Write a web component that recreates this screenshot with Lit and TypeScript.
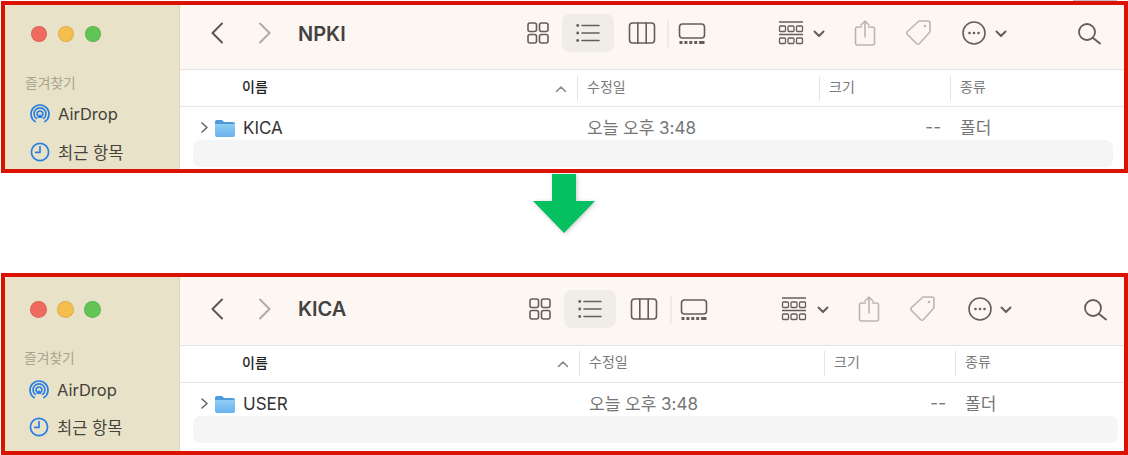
import { LitElement, html, svg, css } from "lit";
import { customElement, property } from "lit/decorators.js";

type Tool = { k: string; c: number; w: number };

const ic = (w: number, body: unknown) =>
  html`<svg width=${w} height="40" viewBox="${-w / 2} -20 ${w} 40">${body}</svg>`;

const icons: Record<string, (w: number) => unknown> = {
  back: (w) => ic(w, svg`<path class="s dk" d="M5 -9.5 L-4.5 0 L5 9.5"/>`),
  fwd: (w) => ic(w, svg`<path class="s lt" d="M-5 -9.5 L4.5 0 L-5 9.5"/>`),
  grid: (w) =>
    ic(w, svg`<g class="s m"><rect x="-10" y="-10" width="8.5" height="8.5" rx="2"/><rect x="1.5" y="-10" width="8.5" height="8.5" rx="2"/><rect x="-10" y="1.5" width="8.5" height="8.5" rx="2"/><rect x="1.5" y="1.5" width="8.5" height="8.5" rx="2"/></g>`),
  list: (w) =>
    ic(w, svg`<path class="s m" d="M-6 -7.5H11M-6 0H11M-6 7.5H11"/><g class="f"><circle cx="-10.3" cy="-7.5" r="1.4"/><circle cx="-10.3" cy="0" r="1.4"/><circle cx="-10.3" cy="7.5" r="1.4"/></g>`),
  cols: (w) =>
    ic(w, svg`<g class="s m"><rect x="-12.5" y="-10" width="25" height="20" rx="3"/><path d="M-4.2 -10V10M4.2 -10V10"/></g>`),
  div: (w) => ic(w, svg`<path class="s rule" d="M0 -12V14"/>`),
  gallery: (w) =>
    ic(w, svg`<rect class="s m" x="-12.5" y="-9" width="25" height="14" rx="3"/><g class="f"><rect x="-12.5" y="8" width="3" height="3"/><rect x="-7.6" y="8" width="3" height="3"/><rect x="-2.7" y="8" width="3" height="3"/><rect x="2.2" y="8" width="3" height="3"/><rect x="7.1" y="8" width="3" height="3"/><rect x="10" y="8" width="2.5" height="3"/></g>`),
  group: (w) =>
    ic(w, svg`<g class="s m thin"><path d="M-12 -11H12M-12 1.5H12"/><rect x="-11.5" y="-7" width="6" height="5.5" rx="1"/><rect x="-3" y="-7" width="6" height="5.5" rx="1"/><rect x="5.5" y="-7" width="6" height="5.5" rx="1"/><rect x="-11.5" y="5" width="6" height="5.5" rx="1"/><rect x="-3" y="5" width="6" height="5.5" rx="1"/><rect x="5.5" y="5" width="6" height="5.5" rx="1"/></g>`),
  chev: (w) => ic(w, svg`<path class="s m bold" d="M-4.5 -1.5 L0 3 L4.5 -1.5"/>`),
  share: (w) =>
    ic(w, svg`<path class="s gr" d="M-3.5 -6H-7.5Q-9.5 -6 -9.5 -4V10Q-9.5 12 -7.5 12H7.5Q9.5 12 9.5 10V-4Q9.5 -6 7.5 -6H3.5M0 4V-12M-4 -8L0 -12L4 -8"/>`),
  tag: (w) =>
    ic(w, svg`<path class="s gr" d="M1 -12H10Q12 -12 12 -10V-2Q12 -1 11 0L1.5 10.5Q0 12 -1.5 10.5L-10.5 1.5Q-12 0 -10.5 -1.5Z"/><circle class="fg" cx="7" cy="-7" r="1.3"/>`),
  more: (w) =>
    ic(w, svg`<circle class="s m" cx="0" cy="0" r="11"/><g class="f"><circle cx="-4.5" r="1.3"/><circle cx="0" r="1.3"/><circle cx="4.5" r="1.3"/></g>`),
  search: (w) => ic(w, svg`<circle class="s m mid" cx="-2" cy="-1" r="8"/><path class="s m bold" d="M4 5L11 10.5"/>`),
};

const toolset = (centers: number[]): Tool[] => {
  const keys = ["back", "fwd", "title", "grid", "list", "cols", "div", "gallery", "group", "chev", "share", "tag", "more", "chev", "search"];
  const widths: Record<string, number> = { back: 14, fwd: 14, title: 120, grid: 24, list: 52, cols: 28, div: 4, gallery: 28, group: 28, chev: 12, share: 24, tag: 28, more: 26, search: 28 };
  return keys.map((k, i) => ({ k, c: centers[i], w: widths[k] }));
};

const FIRST = toolset([217, 265, 358, 538, 588, 641.5, 668, 691.5, 791, 819, 865, 917.5, 974, 1001, 1089]);
const SECOND = toolset([217, 265, 358, 540, 590, 644, 671, 694, 794, 823, 869, 922, 980, 1006, 1095]);

@customElement("finder-panel")
export class FinderPanel extends LitElement {
  @property() variant = "first";
  @property() title = "";
  @property() item = "";
  @property({ attribute: false }) tools: Tool[] = [];

  static styles = css`
    :host { display: block; font-family: Inter, "Noto Sans CJK KR", sans-serif; }
    .panel { box-sizing: border-box; width: 1127px; border: 4px solid #dc1200; display: flex; overflow: hidden; background: #fff; }
    .first.panel { height: 172px; --tb: 65px; --tbpb: 7.5px; --titlept: 2px; --hd: 37px; --rowpt: 7px; --rowh: 33px; --stripe-r: 11px; --itempb: 1px;
      --lights-top: 21px; --light: 16px; --lights-gap: 11px; --lights-ml: 26px; --label-mt: 31px; --label-mb: 2px; --label-ml: 20px; --item: 38px; --item-ml: 25px;
      --cols: 397px 242px 131px 1fr; }
    .second.panel { height: 182px; --tb: 69px; --tbpb: 3.5px; --titlept: 0px; --hd: 36.5px; --rowpt: 7.5px; --rowh: 33.5px; --stripe-r: 6px; --itempb: 0px;
      --lights-top: 24px; --light: 17px; --lights-gap: 10px; --lights-ml: 24.5px; --label-mt: 30px; --label-mb: 3px; --label-ml: 19px; --item: 37px; --item-ml: 24px;
      --cols: 399px 245px 131px 1fr; }
    .side { box-sizing: border-box; width: 175px; flex: none; background: #e8e2c8; border-right: 1px solid #dcd7c0; padding-top: var(--lights-top); border-top-left-radius: 3px; }
    .lights { display: flex; gap: var(--lights-gap); margin-left: var(--lights-ml); }
    .light { width: var(--light); height: var(--light); border-radius: 50%; box-sizing: border-box; border: 1px solid rgba(0,0,0,.08); }
    .red { background: #ef6a5f; } .yellow { background: #f6bd4f; } .green { background: #62c454; }
    .label { height: 20px; line-height: 20px; margin: var(--label-mt) 0 var(--label-mb) var(--label-ml); font-size: 13.8px; font-weight: 400; color: #a8a490; }
    .item { height: var(--item); display: flex; align-items: center; gap: 8px; margin-left: var(--item-ml); font-size: 16.5px; color: #44423b; white-space: nowrap; padding-top: 1px; padding-bottom: var(--itempb); box-sizing: border-box; }
    .item svg { flex: none; width: 20px; height: 20px; }
    .blue { fill: none; stroke: #2a7fe2; stroke-width: 1.7; stroke-linecap: round; stroke-linejoin: round; }
    .bluef { fill: #2a7fe2; }

    .main { flex: 1; min-width: 0; display: flex; flex-direction: column; }
    .toolbar { box-sizing: border-box; flex: none; height: var(--tb); padding-bottom: var(--tbpb); background: #fcf7f2; border-bottom: 1.5px solid #e6e4e1; display: flex; align-items: center; }
    .slot { flex: none; height: 40px; display: flex; align-items: center; justify-content: center; box-sizing: border-box; }
    .slot.list { height: 38px; background: #f0ece7; border-radius: 8px; }
    .slot.title { justify-content: flex-start; font-size: 20px; font-weight: 600; color: #444240; padding-top: var(--titlept); }
    svg { display: block; overflow: visible; }
    .s { fill: none; stroke-width: 1.6; stroke-linecap: round; stroke-linejoin: round; }
    .dk { stroke: #5a5753; stroke-width: 2; }
    .lt { stroke: #aeaba7; stroke-width: 2; }
    .m { stroke: #655e58; }
    .thin { stroke-width: 1.3; stroke-linecap: butt; }
    .mid { stroke-width: 1.8; }
    .bold { stroke-width: 2; }
    .gr { stroke: #bab6af; }
    .rule { stroke: #e8e5e0; stroke-width: 1.5; }
    .f { fill: #655e58; }
    .fg { fill: #bab6af; }

    .head, .row { display: grid; grid-template-columns: var(--cols); }
    .head { box-sizing: border-box; flex: none; height: var(--hd); border-bottom: 1.5px solid #e6e6e6; align-items: center; font-size: 14px; color: #7a7a7a; }
    .cell { box-sizing: border-box; border-left: 1.5px solid transparent; padding-left: 9px; min-width: 0; }
    .head .cell { height: 25px; line-height: 22px; border-left-color: #e4e4e4; }
    .head .name { border-left-color: transparent; display: flex; justify-content: space-between; align-items: center; padding: 0 11px 2px 61px; color: #222; font-weight: 500; }
    .head .name svg { margin-top: 3px; }
    .row { box-sizing: border-box; flex: none; height: var(--rowh); padding-top: var(--rowpt); align-items: center; font-size: 17px; color: #757575; white-space: nowrap; }
    .row .cell { margin-bottom: 2px; }
    .row .name { border: 0; margin-bottom: 0; padding: 0 0 0 21px; display: flex; align-items: center; color: #333; }
    .row .name .dis { margin-right: 7px; }
    .row .name .fold { margin-right: 8px; }
    .row .size { text-align: right; padding-right: 9px; }
    .stripe { flex: none; height: 27px; margin: 0 var(--stripe-r) 0 13px; background: #f4f5f4; border-radius: 7px; }
  `;

  private toolbar() {
    let right = 180;
    return this.tools.map((t) => {
      const left = t.c - t.w / 2;
      const ml = left - right;
      right = left + t.w;
      const body = t.k === "title" ? this.title : icons[t.k](t.w);
      return html`<div class="slot ${t.k}" style="margin-left:${ml}px;width:${t.w}px">${body}</div>`;
    });
  }

  render() {
    return html`<div class="panel ${this.variant}">
      <div class="side">
        <div class="lights"><div class="light red"></div><div class="light yellow"></div><div class="light green"></div></div>
        <div class="label">즐겨찾기</div>
        <div class="item">
          <svg viewBox="0 0 20 20">
            <g class="blue">
              <path d="M5.2 17.6A9 9 0 1 1 14.8 17.6"/>
              <path d="M6.3 14.4A5.9 5.9 0 1 1 13.7 14.4"/>
              <path d="M8.1 12.1A2.9 2.9 0 1 1 11.9 12.1"/>
            </g>
            <path class="bluef" d="M10 9.8L12.6 14H7.4Z"/>
          </svg>
          AirDrop
        </div>
        <div class="item">
          <svg viewBox="0 0 20 20"><g class="blue"><circle cx="10" cy="10" r="8.6"/><path d="M10 4.6V10.4H5.8"/></g></svg>
          최근 항목
        </div>
      </div>
      <div class="main">
        <div class="toolbar">${this.toolbar()}</div>
        <div class="head">
          <div class="cell name">
            <span>이름</span>
            <svg width="10" height="6" viewBox="0 0 10 6"><path class="s" stroke="#8a8a8a" stroke-width="1.4" d="M0.5 5.5L5 1L9.5 5.5"/></svg>
          </div>
          <div class="cell">수정일</div>
          <div class="cell">크기</div>
          <div class="cell">종류</div>
        </div>
        <div class="row">
          <div class="cell name">
            <svg class="dis" width="7" height="11" viewBox="0 0 7 11"><path class="s" stroke="#666" stroke-width="1.6" d="M1 1L6 5.5L1 10"/></svg>
            <svg class="fold" width="20" height="18" viewBox="0 0 20 18">
              <defs><linearGradient id="fg-${this.variant}" x1="0" y1="0" x2="0" y2="1"><stop offset="0" stop-color="#90cdf6"/><stop offset="1" stop-color="#68b2ec"/></linearGradient></defs>
              <path fill="#4f9ad9" d="M0 3Q0 1 2 1H7L9 3H18Q20 3 20 5V8H0Z"/>
              <path fill="url(#fg-${this.variant})" d="M0 5H20V16Q20 18 18 18H2Q0 18 0 16Z"/>
            </svg>
            ${this.item}
          </div>
          <div class="cell">오늘 오후 3:48</div>
          <div class="cell size">--</div>
          <div class="cell">폴더</div>
        </div>
        <div class="stripe"></div>
      </div>
    </div>`;
  }
}

@customElement("app-root")
export class AppRoot extends LitElement {
  static styles = css`
    :host { display: block; width: 1128px; height: 455px; overflow: hidden; background: #fff; }
    .page { box-sizing: border-box; height: 455px; padding-left: 1px; }
    .sliver { height: 1px; width: 44px; margin-left: 1072px; background: #c4c2c0; }
    .gap { height: 100px; box-sizing: border-box; padding-top: 1px; display: flex; justify-content: center; margin-left: -1px; }
    .arrow { display: block; filter: drop-shadow(1px 1px 2px rgba(0,0,0,.22)); }
  `;
  render() {
    return html`<div class="page">
      <div class="sliver"></div>
      <finder-panel variant="first" title="NPKI" item="KICA" .tools=${FIRST}></finder-panel>
      <div class="gap">
        <svg class="arrow" width="62" height="60" viewBox="0 0 62 60"><path fill="#04c060" d="M19 0H43V27H62L31 59L0 27H19Z"/></svg>
      </div>
      <finder-panel variant="second" title="KICA" item="USER" .tools=${SECOND}></finder-panel>
    </div>`;
  }
}
